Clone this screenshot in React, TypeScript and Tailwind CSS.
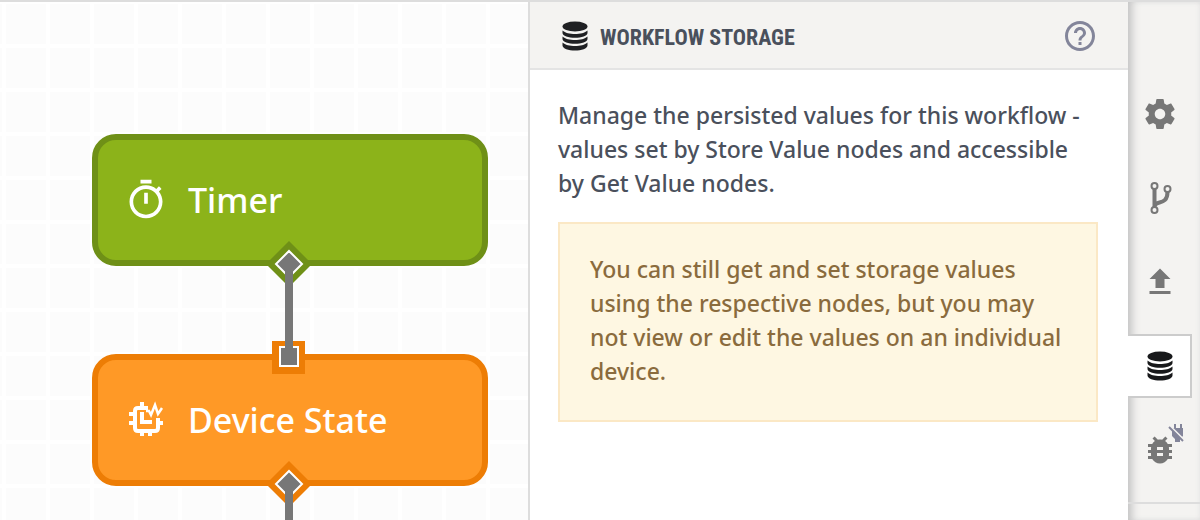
import type { ReactNode } from "react";

function Icon({ path, className }: { path: string; className: string }) {
  return (
    <svg viewBox="0 0 24 24" fill="currentColor" aria-hidden="true" className={className}>
      <path d={path} />
    </svg>
  );
}

const TIMER =
  "M15 1H9v2h6V1zm-4 13h2V8h-2v6zm8.03-6.61l1.42-1.42c-.43-.51-.9-.99-1.41-1.41l-1.42 1.42C16.07 4.74 14.12 4 12 4c-4.97 0-9 4.03-9 9s4.02 9 9 9 9-4.03 9-9c0-2.12-.74-4.07-1.97-5.61zM12 20c-3.87 0-7-3.13-7-7s3.13-7 7-7 7 3.13 7 7-3.13 7-7 7z";
const SETTINGS =
  "M19.43 12.98c.04-.32.07-.64.07-.98s-.03-.66-.07-.98l2.11-1.65c.19-.15.24-.42.12-.64l-2-3.46c-.12-.22-.39-.3-.61-.22l-2.49 1c-.52-.4-1.08-.73-1.69-.98l-.38-2.65C14.46 2.18 14.25 2 14 2h-4c-.25 0-.46.18-.49.42l-.38 2.65c-.61.25-1.17.59-1.69.98l-2.49-1c-.23-.09-.49 0-.61.22l-2 3.46c-.13.22-.07.49.12.64l2.11 1.65c-.04.32-.07.65-.07.98s.03.66.07.98l-2.11 1.65c-.19.15-.24.42-.12.64l2 3.46c.12.22.39.3.61.22l2.49-1c.52.4 1.08.73 1.69.98l.38 2.65c.03.24.24.42.49.42h4c.25 0 .46-.18.49-.42l.38-2.65c.61-.25 1.17-.59 1.69-.98l2.49 1c.23.09.49 0 .61-.22l2-3.46c.12-.22.07-.49-.12-.64l-2.11-1.65zM12 15.5c-1.93 0-3.5-1.57-3.5-3.5s1.57-3.5 3.5-3.5 3.5 1.57 3.5 3.5-1.57 3.5-3.5 3.5z";
const UPLOAD = "M9 16h6v-6h4l-7-7-7 7h4zm-4 2h14v2H5z";
const BUG =
  "M20 8h-2.81c-.45-.78-1.07-1.45-1.82-1.96L17 4.41 15.59 3l-2.17 2.17C12.96 5.06 12.49 5 12 5c-.49 0-.96.06-1.41.17L8.41 3 7 4.41l1.62 1.63C7.88 6.55 7.26 7.22 6.81 8H4v2h2.09c-.05.33-.09.66-.09 1v1H4v2h2v1c0 .34.04.67.09 1H4v2h2.81c1.04 1.79 2.97 3 5.19 3s4.15-1.21 5.19-3H20v-2h-2.09c.05-.33.09-.66.09-1v-1h2v-2h-2v-1c0-.34-.04-.67-.09-1H20V8zm-6 8h-4v-2h4v2zm0-4h-4v-2h4v2z";
const HELP =
  "M11 18h2v-2h-2v2zm1-16C6.48 2 2 6.48 2 12s4.48 10 10 10 10-4.48 10-10S17.52 2 12 2zm0 18c-4.41 0-8-3.59-8-8s3.59-8 8-8 8 3.59 8 8-3.59 8-8 8zm0-14c-2.21 0-4 1.79-4 4h2c0-1.1.9-2 2-2s2 .9 2 2c0 2-3 1.75-3 5h2c0-2.25 3-2.5 3-5 0-2.21-1.79-4-4-4z";

function DatabaseIcon({ className }: { className: string }) {
  return (
    <svg viewBox="0 0 26 30" fill="currentColor" aria-hidden="true" className={className}>
      <ellipse cx="13" cy="5.5" rx="12.5" ry="5" />
      <path d="M.5 9.5C3 12 8 13 13 13s10-1 12.500-3.500v2.500c0 3-6 4.800-12.500 4.800S.5 15 .5 12z" />
      <path d="M.5 15.500C3 18 8 19 13 19s10-1 12.500-3.500V18c0 3-6 4.800-12.500 4.800S.5 21 .5 18z" />
      <path d="M.5 21.500C3 24 8 25 13 25s10-1 12.500-3.500V24.500c0 3-6 5-12.500 5S.5 27.500.5 24.500z" />
    </svg>
  );
}

function BranchIcon() {
  return (
    <svg viewBox="0 0 36 36" fill="none" stroke="currentColor" aria-hidden="true" className="size-9">
      <path strokeWidth="4" d="M12.500 9v18M25.500 12c0 8-4 9.500-8 10.500-3 .8-5 1.500-5 4.500" />
      <g strokeWidth="2" fill="#f4f3f1">
        <circle cx="12.500" cy="6" r="3" />
        <circle cx="25.500" cy="9" r="3" />
        <circle cx="12.500" cy="30" r="3" />
      </g>
    </svg>
  );
}

function DeviceIcon() {
  return (
    <svg viewBox="0 0 44 44" fill="none" stroke="currentColor" aria-hidden="true" className="size-11">
      <path strokeWidth="4" d="M24 10H14q-3 0-3 3v17q0 3 3 3h17q3 0 3-3V20" />
      <path strokeWidth="4" d="M18 10V4M18 33v5M26 33v5M11 16H5M11 25H5M34 25h5" />
      <path strokeWidth="4" d="M18 14v10h10" />
      <path strokeWidth="2.500" d="M22 13h3l2 4 4-10 3 9 4-6" />
    </svg>
  );
}

function UnpluggedIcon() {
  return (
    <svg viewBox="0 0 16 18" aria-hidden="true" className="h-[18px] w-4">
      <path fill="#83859a" d="M6 0h2v4h4V0h2v4h1v8l-3 3v3H7v-3l-3-3V4h2z" />
      <path stroke="#f4f3f1" strokeWidth="2" d="M2 2l14 14" />
      <path stroke="#83859a" strokeWidth="2" d="M1 3l14 14" />
    </svg>
  );
}

function FlowNode({ label, icon, tone, place }: { label: string; icon: ReactNode; tone: string; place: string }) {
  return (
    <div
      className={`absolute left-[92px] flex h-[132px] w-[396px] items-center gap-5 rounded-3xl border-[6px] pl-[26px] text-[34px] font-medium text-white ${tone} ${place}`}
    >
      {icon}
      <span>{label}</span>
    </div>
  );
}

function Wires() {
  return (
    <svg width="528" height="520" viewBox="0 0 528 520" aria-hidden="true" className="absolute left-0 top-0">
      <path fill="#6f9017" d="M289 241l23 23-23 23-23-23z" />
      <path fill="#ed7d05" d="M272 341h33v33h-33zM289 461l23 23-23 23-23-23z" />
      <g fill="#777" stroke="#fff" strokeWidth="2">
        <path d="M289 251l13 13-13 13-13-13z" />
        <path d="M280 347h18v19h-18z" />
        <path d="M289 471l13 13-13 13-13-13z" />
      </g>
      <path fill="#777" d="M285 264h8v90h-8zM285 484h8v36h-8z" />
    </svg>
  );
}

function RailButton({ label, children }: { label: string; children: ReactNode }) {
  return (
    <button type="button" aria-label={label} className="relative flex h-[84px] w-16 items-center justify-center text-[#777]">
      {children}
    </button>
  );
}

export default function App() {
  return (
    <div className="flex h-screen overflow-hidden border-t-2 border-[#dddddd] bg-white font-['Noto_Sans','Open_Sans',sans-serif]">
      <main className="relative min-w-0 flex-1 overflow-hidden bg-[#fcfcfc] bg-[linear-gradient(to_right,#fff_4px,transparent_4px),linear-gradient(to_bottom,#fff_4px,transparent_4px)] bg-size-[44px_44px] bg-position-[2px_-2px]">
        <div className="absolute left-0 -top-0.5">
          <FlowNode
            label="Timer"
            tone="border-[#6f9017] bg-[#8cb31a]"
            place="top-[134px]"
            icon={<Icon path={TIMER} className="size-11" />}
          />
          <FlowNode label="Device State" tone="border-[#ed7d05] bg-[#ff9926]" place="top-[354px]" icon={<DeviceIcon />} />
          <Wires />
        </div>
      </main>

      <section className="w-[600px] shrink-0 border-l-2 border-[#dddddd] bg-white text-[#4a505c]">
        <header className="flex h-[68px] items-center gap-3 border-b-2 border-[#e4e4e4] bg-[#f4f3f1] pl-8 pr-[30px] pt-0.5">
          <DatabaseIcon className="h-[30px] w-[26px] text-[#1f2023]" />
          <h1 className="flex-1 pt-0.5 font-['Roboto_Condensed',Roboto,sans-serif] text-[22px] font-bold">
            WORKFLOW STORAGE
          </h1>
          <button type="button" aria-label="Help" className="text-[#83859a]">
            <Icon path={HELP} className="size-9" />
          </button>
        </header>
        <div className="px-7 pt-7 text-[23px] font-medium leading-[34px]">
          <p className="pr-4">
            Manage the persisted values for this workflow - values set by Store Value nodes and accessible by Get Value nodes.
          </p>
          <p className="mr-0.5 mt-[22px] border-2 border-[#fbe8c5] bg-[#fef7e2] pb-8 pl-[30px] pr-7 pt-7 text-[#8a6b3d]">
            You can still get and set storage values using the respective nodes, but you may not view or edit the values on an
            individual device.
          </p>
        </div>
      </section>

      <nav aria-label="Workflow tools" className="flex w-[72px] shrink-0 flex-col bg-[#f4f3f1] pt-[70px] shadow-[inset_10px_0_8px_-6px_#c4c4c4,inset_0_0_5px_#e0e0e0]">
        <RailButton label="Settings">
          <Icon path={SETTINGS} className="size-9" />
        </RailButton>
        <RailButton label="Versions">
          <BranchIcon />
        </RailButton>
        <RailButton label="Upload">
          <Icon path={UPLOAD} className="size-9" />
        </RailButton>
        <button
          type="button"
          aria-label="Storage"
          className="my-2.5 flex h-16 w-16 shrink-0 items-center justify-center border-2 border-l-0 border-[#cccccc] bg-white pl-0.5 text-[#18191b]"
        >
          <DatabaseIcon className="h-[30px] w-[26px]" />
        </button>
        <RailButton label="Debug">
          <Icon path={BUG} className="size-9" />
          <span className="absolute right-2 top-4">
            <UnpluggedIcon />
          </span>
        </RailButton>
        <hr className="mt-2.5 border-t-2 border-[#dddddd]" />
      </nav>
    </div>
  );
}
